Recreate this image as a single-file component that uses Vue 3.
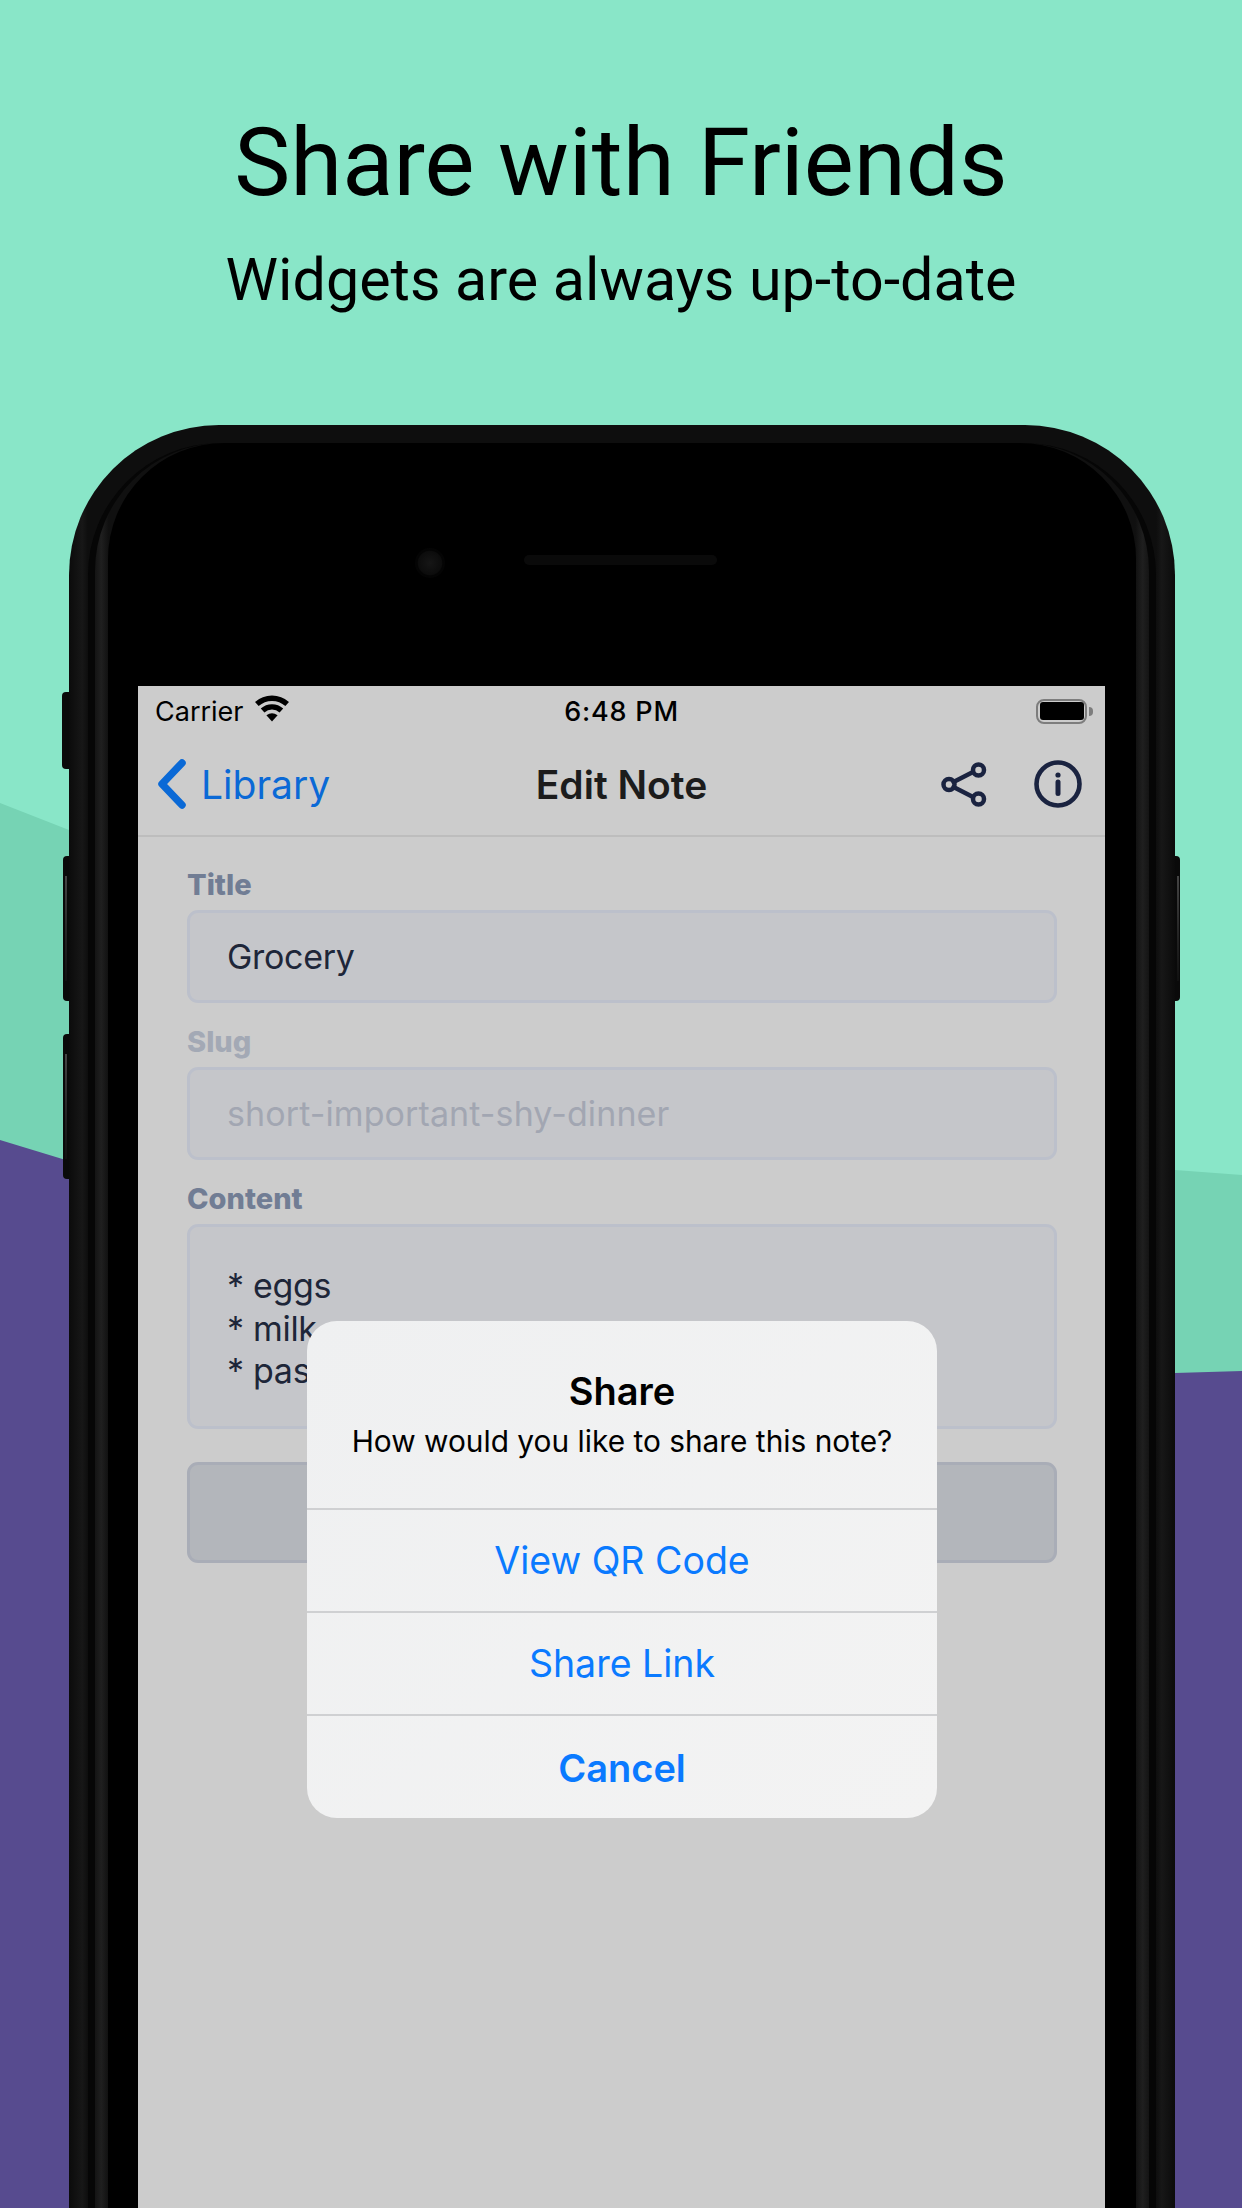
<template>
  <div class="page">
    <svg class="waves" width="1242" height="2208" viewBox="0 0 1242 2208">
      <polygon fill="#76d3b4" points="0,803 69,830 1175,1170 1242,1175 1242,2208 0,2208" />
      <polygon fill="#574b8f" points="0,1140 69,1161 1175,1373 1242,1371 1242,2208 0,2208" />
    </svg>

    <header class="hero">
      <h1>Share with Friends</h1>
      <p>Widgets are always up-to-date</p>
    </header>

    <div class="phone">
      <span class="side-btn silent"></span>
      <span class="side-btn volume vol-up"></span>
      <span class="side-btn volume vol-down"></span>
      <span class="side-btn volume power"></span>
      <div class="rim">
        <div class="band">
          <div class="bezel">
            <div class="sensors">
              <span class="camera"></span>
              <span class="speaker"></span>
            </div>
            <div class="screen">
              <div class="status-bar">
                <div class="carrier">
                  <span>Carrier</span>
                  <svg width="38" height="27" viewBox="0 0 35 25">
                    <path d="M3.45 8.4A21 21 0 0 1 31.55 8.4" fill="none" stroke="#000" stroke-width="5" />
                    <path d="M8.8 14.34A13 13 0 0 1 26.2 14.34" fill="none" stroke="#000" stroke-width="5" />
                    <path d="M17.5 24.5L12.3 18.8Q17.5 15 22.7 18.8Z" fill="#000" />
                  </svg>
                </div>
                <span class="time">6:48 PM</span>
                <div class="battery">
                  <div class="battery-body"><span></span></div>
                  <i class="battery-nub"></i>
                </div>
              </div>

              <nav class="navbar">
                <div class="back">
                  <svg width="30" height="50" viewBox="0 0 30 50">
                    <path d="M25 4L5 25L25 46" fill="none" stroke="#0a69d6" stroke-width="7.5" stroke-linecap="round" stroke-linejoin="round" />
                  </svg>
                  <span>Library</span>
                </div>
                <div class="nav-title">Edit Note</div>
                <div class="nav-actions">
                  <svg width="46" height="46" viewBox="0 0 46 46">
                    <g fill="none" stroke="#1a2340" stroke-width="4.5">
                      <path d="M12.5 21L32 11M12.5 26L32 36" stroke-linecap="round" />
                      <circle cx="8" cy="23.5" r="5.5" />
                      <circle cx="37.5" cy="9" r="5.5" />
                      <circle cx="37.5" cy="38" r="5.5" />
                    </g>
                  </svg>
                  <svg width="48" height="48" viewBox="0 0 48 48">
                    <circle cx="24" cy="24" r="21.5" fill="none" stroke="#1a2340" stroke-width="4.6" />
                    <circle cx="24" cy="15" r="2.6" fill="#1a2340" />
                    <path d="M24 22V33.5" stroke="#1a2340" stroke-width="5" stroke-linecap="round" />
                  </svg>
                </div>
              </nav>

              <form class="note-form">
                <label class="field-label">Title</label>
                <div class="field">Grocery</div>
                <label class="field-label muted">Slug</label>
                <div class="field muted">short-important-shy-dinner</div>
                <label class="field-label">Content</label>
                <div class="field area">
                  <div v-for="line in contentLines" :key="line">{{ line }}</div>
                </div>
                <div class="save-btn"></div>
              </form>

              <div class="alert">
                <div class="alert-head">
                  <div class="alert-title">Share</div>
                  <div class="alert-msg">How would you like to share this note?</div>
                </div>
                <div v-for="action in actions" :key="action.label" class="alert-action" :class="{ strong: action.strong }">
                  {{ action.label }}
                </div>
              </div>
            </div>
          </div>
        </div>
      </div>
    </div>
  </div>
</template>

<script setup>
const contentLines = ['* eggs', '* milk', '* pasta']

const actions = [
  { label: 'View QR Code' },
  { label: 'Share Link' },
  { label: 'Cancel', strong: true },
]
</script>

<style>
html,
body {
  margin: 0;
  background: #89e6c8;
}
</style>

<style scoped>
.page {
  position: relative;
  width: 1242px;
  height: 2208px;
  overflow: hidden;
  background: #89e6c8;
  font-family: Inter, "Liberation Sans", sans-serif;
}

.waves {
  position: absolute;
  top: 0;
  left: 0;
}

.hero {
  position: relative;
  height: 425px;
  box-sizing: border-box;
  padding-top: 107px;
  text-align: center;
  font-family: Roboto, sans-serif;
  color: #000;
}

.hero h1 {
  margin: 0;
  font-size: 94.3px;
  line-height: 112px;
  font-weight: 400;
}

.hero p {
  margin: 26px 0 0;
  font-size: 59.2px;
  line-height: 70px;
}

.phone {
  position: relative;
  width: 1106px;
  margin-left: 69px;
  box-sizing: border-box;
  padding: 18px 19px 0;
  border-radius: 150px 150px 0 0;
  background: linear-gradient(90deg, #0b0b0b, #171717 1.2%, #0e0e0e 1.7%, #0e0e0e 98.3%, #171717 98.8%, #0b0b0b);
}

.side-btn {
  position: absolute;
  background: #0a0a0a;
  border-radius: 4px 0 0 4px;
}

.silent {
  left: -7px;
  top: 267px;
  width: 7px;
  height: 77px;
}

.volume {
  left: -6px;
  width: 6px;
  height: 145px;
  overflow: hidden;
}

.volume::after {
  content: "";
  position: absolute;
  left: 2px;
  top: 20px;
  bottom: 20px;
  width: 2px;
  background: linear-gradient(#444, #222 60%, #111);
}

.vol-up {
  top: 431px;
}

.vol-down {
  top: 609px;
}

.power {
  left: auto;
  right: -5px;
  top: 431px;
  width: 5px;
  border-radius: 0 4px 4px 0;
}

.rim {
  padding: 0 7px;
  border-radius: 132px 132px 0 0;
  background: #060606;
}

.band {
  padding: 0 13px;
  border-radius: 128px 128px 0 0;
  background: linear-gradient(90deg, #141414, #1f1f1f 0.6%, #101010 1.3%, #101010 98.7%, #1f1f1f 99.4%, #141414);
}

.bezel {
  padding: 0 31px 0 30px;
  border-radius: 116px 116px 0 0;
  background: #000;
}

.sensors {
  height: 243px;
  box-sizing: border-box;
  padding: 105px 0 0 277px;
  display: flex;
  align-items: flex-start;
}

.camera {
  width: 30px;
  height: 30px;
  border-radius: 50%;
  background: radial-gradient(circle at 50% 50%, #161616 0, #0c0c0c 55%, #040404 60%, #050505 100%);
}

.speaker {
  width: 193px;
  height: 10px;
  margin: 7px 0 0 79px;
  border-radius: 5px;
  background: #0a0a0a;
}

.screen {
  position: relative;
  height: 1600px;
  background: #ccc;
  color: #000;
}

.status-bar {
  height: 55px;
  box-sizing: border-box;
  padding: 0 17px 5px;
  display: grid;
  grid-template-columns: 1fr auto 1fr;
  align-items: center;
}

.carrier {
  display: flex;
  align-items: center;
  gap: 9px;
  font-size: 27px;
}

.carrier svg {
  margin-top: -5px;
}

.time {
  font-size: 27px;
  font-weight: 500;
  letter-spacing: 0.8px;
}

.battery {
  justify-self: end;
  display: flex;
  align-items: center;
  gap: 2px;
  margin-right: -5px;
}

.battery-body {
  width: 51px;
  height: 25px;
  box-sizing: border-box;
  padding: 1.5px;
  border: 2.5px solid #7d7d7d;
  border-radius: 8px;
}

.battery-body span {
  display: block;
  height: 100%;
  border-radius: 3px;
  background: #000;
}

.battery-nub {
  width: 4px;
  height: 9px;
  border-radius: 0 4px 4px 0;
  background: #7d7d7d;
}

.navbar {
  height: 96px;
  box-sizing: border-box;
  padding: 0 23px 8px;
  display: grid;
  grid-template-columns: 1fr auto 1fr;
  align-items: center;
  border-bottom: 2px solid #bdbdbd;
}

.back {
  display: flex;
  align-items: center;
  gap: 14px;
  margin-left: -4px;
  color: #0a69d6;
  font-size: 39px;
}

.nav-title {
  color: #1c1c1c;
  font-size: 39px;
  font-weight: 600;
}

.nav-actions {
  justify-self: end;
  display: flex;
  align-items: center;
  gap: 47px;
}

.note-form {
  padding: 23px 48px 0 49px;
  display: flex;
  flex-direction: column;
}

.field-label {
  height: 50px;
  line-height: 49px;
  font-size: 29px;
  font-weight: 800;
  color: #717d94;
}

.field-label.muted {
  color: #a3a9b5;
}

.field {
  height: 93px;
  box-sizing: border-box;
  margin-bottom: 14px;
  padding: 0 37px;
  display: flex;
  align-items: center;
  border: 3px solid #bcc0cb;
  border-radius: 11px;
  background: #c5c6ca;
  color: #1e2639;
  font-size: 34px;
  letter-spacing: -0.3px;
}

.field.muted {
  color: #a2a6b2;
  letter-spacing: 0.1px;
}

.field.area {
  height: 205px;
  margin-bottom: 33px;
  padding: 38px 37px 0;
  display: block;
  line-height: 42.5px;
}

.save-btn {
  height: 101px;
  box-sizing: border-box;
  border: 3px solid #a9adb7;
  border-radius: 11px;
  background: #b3b6bb;
}

.alert {
  position: absolute;
  top: 635px;
  left: 169px;
  width: 630px;
  height: 497px;
  border-radius: 30px;
  overflow: hidden;
  background: linear-gradient(135deg, #eff0f1, #f3f3f3);
  text-align: center;
}

.alert-head {
  height: 187px;
  box-sizing: border-box;
  padding-top: 47px;
}

.alert-title {
  font-size: 38px;
  line-height: 46px;
  font-weight: 600;
}

.alert-msg {
  margin-top: 7px;
  font-size: 29.85px;
  line-height: 40px;
}

.alert-action {
  height: 103px;
  box-sizing: border-box;
  border-top: 2px solid #cfd0d2;
  line-height: 102px;
  color: #0a7aff;
  font-size: 37.5px;
}

.alert-action.strong {
  font-size: 38px;
  font-weight: 600;
  line-height: 104px;
}
</style>
